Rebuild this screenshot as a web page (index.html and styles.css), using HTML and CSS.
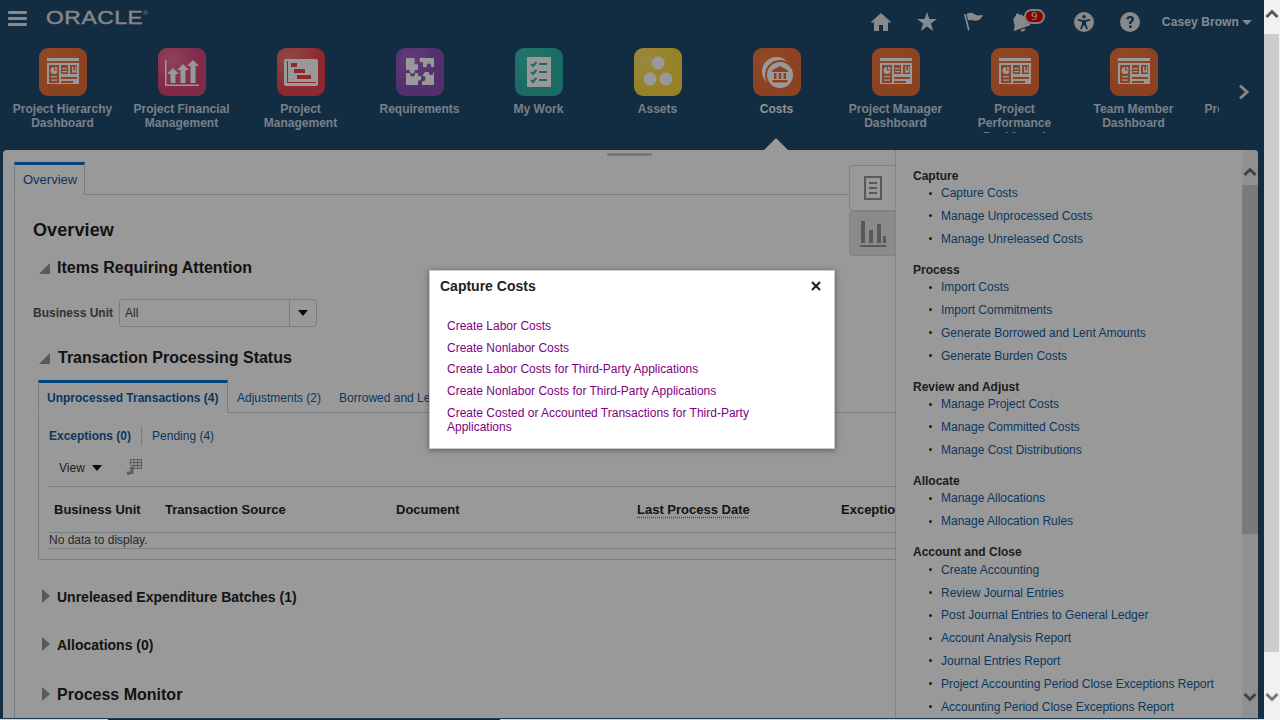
FILE: index.html
```html
<!DOCTYPE html>
<html lang="en">
<head>
<meta charset="utf-8">
<title>Costs</title>
<link rel="stylesheet" href="styles.css">
</head>
<body>
<svg class="defs" width="0" height="0" aria-hidden="true">
  <symbol id="dash" viewBox="0 0 48 48">
    <path class="g" d="M8 10h32v3H8zM8 15h32v21H8z"/>
    <path class="c" d="M10 17h10v18H10zM22 17h7v9h-7zM31 17h7v9h-7zM22 29h16v2H22zM22 33h12v2H22z"/>
    <path class="g" d="M15 19a3.5 3.5 0 1 0 3.5 3.5H15zM16 18.500a3.500 3.500 0 0 1 3 3h-3zM12 28h6v1.300h-6zM12 31.500h6v1.300h-6zM23 20h5v1.300h-5zM23 23h5v1.300h-5zM33 18.500h1.300v4h1.700v-4h1.300v6h-4.300z"/>
  </symbol>
</svg>
<div class="app">
  <header class="topbar">
    <button class="burger" aria-label="Menu"><i></i><i></i><i></i></button>
    <span class="logo">ORACLE<sup>®</sup></span>
    <div class="spring"></div>
    <svg class="ti home" viewBox="0 0 20 18"><path d="M10 0 0 9l1.200 1.300L3 8.700V18h5v-6h4v6h5V8.700l1.800 1.600L20 9z"/></svg>
    <svg class="ti star" viewBox="0 0 20 19"><path d="m10 0 2.400 7H20l-6.100 4.500L16.200 19 10 14.400 3.800 19l2.300-7.500L0 7h7.600z"/></svg>
    <svg class="ti flag" viewBox="0 0 20 19"><path d="M0 2.500 1.700 2l4 16-1.700.6zM2.500 2C6 0 9 .8 11 2.500c3 1.500 5 1 8 .2-1 2-2 3.500-3.500 5-3 1.500-6 1-8 .3-1.500-.3-2.500 0-3.200.5z"/></svg>
    <div class="bell-wrap">
      <svg class="ti bell" viewBox="0 0 20 20"><path d="M10 1c1 0 1.700.7 1.700 1.600 2.800.8 4.300 3.200 4.300 6.400 0 3 1 4.500 2.500 6v1.500H1.500V15C3 13.500 4 12 4 9c0-3.200 1.500-5.600 4.300-6.400C8.300 1.700 9 1 10 1zM7.500 17.500h5a2.500 2.500 0 0 1-5 0z"/></svg>
      <span class="badge">9</span>
    </div>
    <svg class="ti acc" viewBox="0 0 20 20"><path fill-rule="evenodd" d="M10 0a10 10 0 1 1 0 20 10 10 0 0 1 0-20zm0 3a1.800 1.800 0 1 0 0 3.600A1.800 1.800 0 0 0 10 3zM4 7l-.4 1.400 4.400 1.300v2.200L6 17l1.400.6 2.600-4.800 2.600 4.800L14 17l-2-5.100V9.700l4.400-1.300L16 7l-6 1.300z"/></svg>
    <svg class="ti help" viewBox="0 0 20 20"><path fill-rule="evenodd" d="M10 0a10 10 0 1 1 0 20 10 10 0 0 1 0-20zM9 13.500v2.600h2.500v-2.600zM10.300 4C8 4 6.600 5 6.300 7.200l2.400.4c.2-1 .7-1.500 1.500-1.500s1.300.4 1.300 1.100c0 .6-.3 1-1 1.500-1.200.9-1.500 1.500-1.500 3.200h2.400c0-1 .2-1.300 1-1.900 1-.8 1.600-1.600 1.600-2.900C14 5.200 12.500 4 10.300 4z"/></svg>
    <span class="user">Casey Brown</span>
    <span class="caret"></span>
  </header>

  <nav class="nav">
    <div class="nav-items">
      <a class="nav-item"><span class="tile orange"><svg viewBox="0 0 48 48"><use href="#dash"/></svg></span><span class="nav-label">Project Hierarchy Dashboard</span></a>
      <a class="nav-item"><span class="tile pink"><svg viewBox="0 0 48 48"><path class="g" d="M7 12h1.500v24.500H41V38H7z"/><path class="g" d="M15 20l6 6h-3.500v9h-5v-9H9zM25 16l6 6h-3.500v13h-5V22H19zM35 12l6 6h-3.500v17h-5V18H29z"/></svg></span><span class="nav-label">Project Financial Management</span></a>
      <a class="nav-item"><span class="tile red"><svg viewBox="0 0 48 48"><rect class="g" x="7" y="11" width="34" height="27" rx="2"/><path class="c" d="M10 13h1v21h28v1H10z"/><path class="c" d="M14 15h6v4h-6zM17 21h11v4H17zM20 27h14v4H20z"/></svg></span><span class="nav-label">Project Management</span></a>
      <a class="nav-item"><span class="tile purple"><svg viewBox="0 0 48 48"><path class="g" d="M10 10h9c-1 1.500-1 3 .5 3.800l-1.500 1c1 2 3 2 4 .7V22h-3.500c1 2-.5 4-2.500 3.500S13 23 14 22h-4zM27 10h11v9h-3c.8-2-.5-3.500-2-3.500s-3 1.500-2 3.500h-4v-5c-2 1-3.500 0-3.500-2s1.500-3 3.500-2zM10 25h4c-.5 2 1 3.500 2.500 3.500s3-1.500 2.500-3.500h3v3c2-.8 3.500.5 3.500 2s-1.500 3-3.500 2.500V37H10zM29 24h4c-1 2 .5 3 2 3s3-1 2-3h1v13H26v-4c2 .8 3.500-.5 3.500-2.500S28 27.500 26 28z"/></svg></span><span class="nav-label">Requirements</span></a>
      <a class="nav-item"><span class="tile teal"><svg viewBox="0 0 48 48"><rect class="g" x="12" y="9" width="24" height="30"/><path class="lines" d="M24 16h8M24 24h8M24 32h8"/><path class="checks" d="M16 16l2 2 3.500-4M16 24l2 2 3.500-4M16 32l2 2 3.500-4"/></svg></span><span class="nav-label">My Work</span></a>
      <a class="nav-item"><span class="tile yellow"><svg viewBox="0 0 48 48"><circle class="g" cx="24" cy="15" r="6.500"/><circle class="g" cx="16" cy="31" r="6.500"/><circle class="g" cx="32" cy="31" r="6.500"/></svg></span><span class="nav-label">Assets</span></a>
      <a class="nav-item current"><span class="tile orange"><svg viewBox="0 0 48 48"><circle class="g" cx="23.500" cy="23.500" r="14.500"/><circle class="c" cx="27" cy="27" r="15"/><circle class="g" cx="27" cy="27" r="13"/><path class="c" d="M27 18l8 4.500v1.500H19v-1.500zM21 25h2.500v6H21zM25.700 25h2.600v6h-2.600zM30.500 25H33v6h-2.500zM19.500 32h15v2.500h-15z"/></svg></span><span class="nav-label">Costs</span></a>
      <a class="nav-item"><span class="tile orange"><svg viewBox="0 0 48 48"><use href="#dash"/></svg></span><span class="nav-label">Project Manager Dashboard</span></a>
      <a class="nav-item"><span class="tile orange"><svg viewBox="0 0 48 48"><use href="#dash"/></svg></span><span class="nav-label clip3">Project Performance Dashboard</span></a>
      <a class="nav-item"><span class="tile orange"><svg viewBox="0 0 48 48"><use href="#dash"/></svg></span><span class="nav-label">Team Member Dashboard</span></a>
      <a class="nav-item"><span class="tile orange"><svg viewBox="0 0 48 48"><use href="#dash"/></svg></span><span class="nav-label">Project Financial Reporting</span></a>
    </div>
    <svg class="nav-next" viewBox="0 0 12 16"><path d="M2 1.500 9 8l-7 6.500"/></svg>
  </nav>

  <main class="main">
    <span class="grabber"></span>
    <section class="content">
      <div class="tabstrip"><a class="tab">Overview</a></div>
      <div class="tabbody">
        <h1 class="title">Overview</h1>
        <div class="sec-head"><i class="tri-open"></i><h2 class="h-large">Items Requiring Attention</h2></div>
        <div class="field">
          <label class="field-label">Business Unit</label>
          <div class="select"><span class="select-val">All</span><span class="select-btn"><i class="arrow"></i></span></div>
        </div>
        <div class="sec-head second"><i class="tri-open"></i><h2 class="h-large">Transaction Processing Status</h2></div>
        <div class="tabs2">
          <a class="tab2 active">Unprocessed Transactions (4)</a>
          <a class="tab2">Adjustments (2)</a>
          <a class="tab2">Borrowed and Lent Transactions (0)</a>
        </div>
        <div class="box">
          <div class="subtabs"><a class="sub on">Exceptions (0)</a><a class="sub">Pending (4)</a></div>
          <div class="toolbar">
            <span class="view">View</span><i class="arrow"></i>
            <svg class="export" viewBox="0 0 16 16"><path d="M4.500.5h11v9h-8M4.500.5v5M4.500 3.500h11M4.500 6.500h11M8 .5v9M11.800.5v9"/><path class="solid" d="M1 16v-3.500h3.500V10H3l3-3 3 3H7.500v5H3.500v1z"/></svg>
          </div>
          <div class="thead">
            <span class="th c1">Business Unit</span>
            <span class="th c2">Transaction Source</span>
            <span class="th c3">Document</span>
            <span class="th c4"><u>Last Process Date</u></span>
            <span class="th">Exception</span>
          </div>
          <div class="nodata">No data to display.</div>
        </div>
        <div class="sec-head closed"><i class="tri-closed"></i><h3 class="h-small">Unreleased Expenditure Batches (1)</h3></div>
        <div class="sec-head closed"><i class="tri-closed"></i><h3 class="h-small">Allocations (0)</h3></div>
        <div class="sec-head closed last"><i class="tri-closed"></i><h2 class="h-large">Process Monitor</h2></div>
      </div>
      <div class="sidetab on"><svg viewBox="0 0 18 24"><path d="M1 1h16v22H1zM5 7h8M5 12h8M5 17h8"/></svg></div>
      <div class="sidetab"><svg viewBox="0 0 26 26"><path class="solid" d="M1 0h4v22H1zM9 9h4v13H9zM17 3h4v19h-4zM23 15h3v7h-3zM0 24h26v2H0z"/></svg></div>
    </section>

    <aside class="side">
      <h4>Capture</h4>
      <ul><li><a>Capture Costs</a></li><li><a>Manage Unprocessed Costs</a></li><li><a>Manage Unreleased Costs</a></li></ul>
      <h4>Process</h4>
      <ul><li><a>Import Costs</a></li><li><a>Import Commitments</a></li><li><a>Generate Borrowed and Lent Amounts</a></li><li><a>Generate Burden Costs</a></li></ul>
      <h4>Review and Adjust</h4>
      <ul><li><a>Manage Project Costs</a></li><li><a>Manage Committed Costs</a></li><li><a>Manage Cost Distributions</a></li></ul>
      <h4>Allocate</h4>
      <ul><li><a>Manage Allocations</a></li><li><a>Manage Allocation Rules</a></li></ul>
      <h4>Account and Close</h4>
      <ul><li><a>Create Accounting</a></li><li><a>Review Journal Entries</a></li><li><a>Post Journal Entries to General Ledger</a></li><li><a>Account Analysis Report</a></li><li><a>Journal Entries Report</a></li><li><a>Project Accounting Period Close Exceptions Report</a></li><li><a>Accounting Period Close Exceptions Report</a></li></ul>
    </aside>

    <div class="vbar">
      <svg class="vb-arrow up" viewBox="0 0 14 10"><path d="M1.500 8 7 2.500 12.500 8"/></svg>
      <div class="vb-thumb"></div>
      <div class="vb-rest"></div>
      <svg class="vb-arrow down" viewBox="0 0 14 10"><path d="M1.500 2 7 7.500 12.500 2"/></svg>
    </div>
  </main>

  <span class="pointer"></span>
  <div class="scrim"></div>
  <div class="bottom"><i class="b-light"></i><i class="b-dark"></i><i class="b-light grow"></i></div>

  <div class="modal" role="dialog">
    <div class="modal-head">
      <span class="modal-title">Capture Costs</span>
      <svg class="modal-close" viewBox="0 0 10 10"><path d="M1 1l8 8M9 1l-8 8"/></svg>
    </div>
    <ul class="modal-links">
      <li><a>Create Labor Costs</a></li>
      <li><a>Create Nonlabor Costs</a></li>
      <li><a>Create Labor Costs for Third-Party Applications</a></li>
      <li><a>Create Nonlabor Costs for Third-Party Applications</a></li>
      <li><a>Create Costed or Accounted Transactions for Third-Party Applications</a></li>
    </ul>
  </div>
</div>

<div class="pagebar">
  <svg class="pb-arrow" viewBox="0 0 14 10"><path d="M1.500 8 7 2.500 12.500 8"/></svg>
  <div class="pb-thumb"></div>
  <svg class="pb-arrow" viewBox="0 0 14 10"><path d="M1.500 2 7 7.500 12.500 2"/></svg>
</div>
</body>
</html>
```
FILE: styles.css
```css
* { box-sizing: border-box; }
html, body { margin: 0; height: 720px; overflow: hidden; }
body { display: flex; font: 12px/14px "Liberation Sans", Arial, sans-serif; color: #333; background: #fff; }
.defs { position: absolute; }
h1, h2, h3, h4, ul { margin: 0; padding: 0; list-style: none; }
i { display: block; }
.app { position: relative; width: 1264px; height: 720px; flex: none; background: #1e4a6e; overflow: hidden; }

/* top bar */
.topbar { display: flex; align-items: center; height: 43px; color: #dfe6ec; }
.burger { width: 19px; height: 15px; margin: 0 0 6px 8px; padding: 0; border: 0; background: none; display: flex; flex-direction: column; justify-content: space-between; }
.burger i { height: 3px; background: #e4e4e4; border-radius: 1px; }
.logo { width: 103px; margin: 0 0 7px 19px; font-size: 19px; line-height: 18px; letter-spacing: .5px; color: #e0e0e0; -webkit-text-stroke: .4px #e0e0e0; transform: scaleX(1.2); transform-origin: left center; white-space: nowrap; }
.logo sup { font-size: 5px; line-height: 0; letter-spacing: 0; -webkit-text-stroke: 0; vertical-align: 9px; }
.spring { flex: 1; }
.ti { display: block; flex: none; fill: #e2e5e8; }
.home { width: 20px; height: 18px; margin-right: 26px; }
.star { width: 20px; height: 19px; margin-right: 27px; }
.flag { width: 20px; height: 19px; }
.bell-wrap { position: relative; width: 20px; height: 20px; margin: 0 44px 0 26px; }
.bell { width: 20px; height: 20px; transform: rotate(-20deg); }
.badge { position: absolute; left: 14px; top: -3px; width: 21px; height: 15px; border-radius: 8px; border: 2px solid #d8d8d8; background: #e00000; color: #fff; font: 12px/11px "Liberation Serif", serif; text-align: center; }
.acc { width: 20px; height: 20px; margin-right: 26px; }
.help { width: 20px; height: 20px; margin-right: 22px; }
.user { font-weight: 700; letter-spacing: .1px; color: #dbe4ec; white-space: nowrap; }
.caret { width: 0; height: 0; margin: 2px 12px 0 3px; border: 5px solid transparent; border-top-color: #dbe4ec; border-bottom: 0; }

/* navigation strip */
.nav { display: flex; height: 107px; padding: 5px 0 0 3px; }
.nav-items { display: flex; width: 1216px; height: 86px; overflow: hidden; flex: none; }
.nav-item { width: 119px; flex: none; display: flex; flex-direction: column; align-items: center; }
.tile { display: block; width: 48px; height: 48px; border-radius: 9px; flex: none; }
.tile svg { display: block; width: 48px; height: 48px; }
.tile .g, .g { fill: #fff; }
.orange { background: radial-gradient(circle at 30% 25%, #f27a42, #e96d37 70%); }
.c { fill: #ec7038; }
.pink { background: radial-gradient(circle at 30% 25%, #ec6e97, #d9447b 60%); }
.pink .c { fill: #d9447b; }
.red { background: radial-gradient(circle at 25% 20%, #f1767a, #ec454d 60%); }
.red .c { fill: #ec454d; }
.purple { background: radial-gradient(circle at 30% 25%, #a165c9, #8a4fb6 60%); }
.teal { background: radial-gradient(circle at 30% 25%, #3ec2b5, #2bb3a6 60%); }
.yellow { background: radial-gradient(circle at 25% 25%, #ffe26a, #fbd83d 60%); }
.lines { fill: none; stroke: #2bb3a6; stroke-width: 2; }
.checks { fill: none; stroke: #2bb3a6; stroke-width: 2; }
.nav-label { display: block; width: 112px; max-height: 30px; margin-top: 6px; overflow: hidden; font-weight: 700; text-align: center; color: #c8d6e2; }
.nav-label.clip3 { max-height: 31px; }
.nav-item.current .nav-label { color: #f1f1f1; }
.nav-next { width: 12px; height: 16px; margin: 36px 0 0 19px; fill: none; stroke: #dfdfdf; stroke-width: 3; flex: none; }

/* main panel */
.main { position: relative; display: flex; height: 568px; margin: 0 6px 0 3px; background: #fff; border-radius: 4px 4px 0 0; overflow: hidden; }
.grabber { position: absolute; left: 604px; top: 3px; width: 45px; height: 3px; border-radius: 2px; background: #c4c9d4; }
.pointer { position: absolute; left: 764px; top: 138px; width: 0; height: 0; border: 12px solid transparent; border-top: 0; border-bottom-color: #fff; }
.content { position: relative; width: 892px; flex: none; padding: 12px 0 0 11px; overflow: hidden; }
.tabstrip { display: flex; height: 33px; border-bottom: 1px solid #c8d1d9; margin-right: 45px; }
.tab { width: 71px; height: 33px; padding: 8px 0 0 8px; border: 1px solid #c8d1d9; border-top: 3px solid #0572ce; border-bottom-color: #fff; font-size: 13px; color: #145c9e; background: #fff; }
.tabbody { border-left: 1px solid #c8d1d9; padding: 25px 0 40px 18px; height: 560px; }
.title { font-size: 18px; line-height: 20px; font-weight: 700; letter-spacing: .1px; color: #222; }
.sec-head { display: flex; align-items: center; margin-top: 18px; height: 20px; }
.sec-head.second { margin-top: 21px; }
.sec-head.second .tri-open { margin-right: 8px; }
.sec-head.closed { margin-top: 27px; }
.sec-head.closed + .closed { margin-top: 28px; }
.sec-head.closed.last { margin-top: 30px; }
.tri-open { width: 0; height: 0; margin: 0 7px 0 6px; border-left: 11px solid transparent; border-bottom: 11px solid #949494; }
.tri-closed { width: 0; height: 0; margin: -2px 7px 0 9px; border: 7px solid transparent; border-left: 8px solid #949494; border-right: 0; }
.h-large { font-size: 16px; line-height: 20px; font-weight: 700; color: #222; }
.h-small { font-size: 14px; line-height: 20px; font-weight: 700; color: #222; }
.field { display: flex; align-items: center; margin-top: 21px; }
.field-label { width: 86px; flex: none; font-weight: 700; color: #555; }
.select { display: flex; width: 198px; height: 28px; border: 1px solid #c8d1d9; border-radius: 3px; }
.select-val { flex: 1; padding: 6px 0 0 5px; color: #444; }
.select-btn { width: 27px; border-left: 1px solid #c8d1d9; display: flex; align-items: center; justify-content: center; }
.arrow { width: 0; height: 0; border: 5px solid transparent; border-top: 6px solid #111; border-bottom: 0; }
.tabs2 { display: flex; height: 33px; margin: 12px 0 0 5px; border-bottom: 1px solid #c8d1d9; width: 857px; }
.tab2 { height: 32px; padding: 11px 9px 0; color: #145c9e; white-space: nowrap; }
.tab2.active { width: 190px; height: 33px; padding: 8px 0 0 8px; border: 1px solid #c8d1d9; border-top: 3px solid #0572ce; border-bottom-color: #fff; font-weight: 700; background: #fff; }
.box { margin-left: 5px; width: 857px; height: 147px; border-left: 1px solid #c8d1d9; border-bottom: 1px solid #c8d1d9; border-radius: 0 0 0 4px; padding: 13px 0 0 10px; }
.subtabs { display: flex; height: 20px; align-items: center; }
.sub { color: #145c9e; padding: 3px 11px 3px 0; }
.sub.on { font-weight: 700; border-right: 1px solid #c8d1d9; margin-right: 10px; padding-right: 10px; }
.toolbar { display: flex; align-items: center; height: 41px; padding: 3px 0 0 10px; border-bottom: 1px solid #c8d1d9; }
.view { margin-right: 7px; color: #333; }
.export { width: 16px; height: 16px; margin: -1px 0 0 24px; fill: none; stroke: #9a9a9a; stroke-width: 1; }
.export .solid { fill: #9a9a9a; stroke: none; }
.thead { display: flex; align-items: center; height: 46px; padding: 0 0 0 5px; border-bottom: 1px solid #c8d1d9; white-space: nowrap; }
.th { font-size: 13px; font-weight: 700; color: #222; flex: none; }
.th u { text-decoration: underline dotted #888; text-underline-offset: 3px; }
.c1 { width: 111px; } .c2 { width: 231px; } .c3 { width: 241px; } .c4 { width: 204px; }
.nodata { height: 16px; line-height: 15px; border-bottom: 1px solid #c8d1d9; color: #444; }
.sidetab { position: absolute; right: 0; top: 15px; width: 46px; height: 46px; background: #fff; border: 1px solid #d9d9d9; border-right: 0; border-radius: 4px 0 0 4px; display: flex; align-items: center; justify-content: center; }
.sidetab + .sidetab { top: 61px; height: 45px; background: #e6e6e6; }
.sidetab svg { width: 18px; height: 24px; fill: none; stroke: #949494; stroke-width: 2; }
.sidetab + .sidetab svg { width: 26px; height: 26px; }
.sidetab .solid { fill: #949494; stroke: none; }

/* task list */
.side { width: 347px; flex: none; padding: 18.500px 0 0 17px; border-left: 1px solid #dcdcdc; overflow: hidden; white-space: nowrap; }
.side h4 { font-size: 12px; line-height: 14px; font-weight: 700; color: #333; margin-bottom: 3.500px; }
.side ul { padding-left: 16px; margin-bottom: 17.100px; display: flex; flex-direction: column; gap: 8.800px; }
.side li { display: flex; align-items: center; }
.side li::before { content: ""; width: 3px; height: 3px; margin-right: 9px; border-radius: 50%; background: #333; flex: none; }
.side a { color: #145c9e; }

.vbar { position: relative; width: 16px; flex: none; background: #f0f0f0; display: flex; flex-direction: column; }
.vb-thumb { height: 349px; margin-top: 35px; background: #cbcbcb; }
.vb-rest { flex: 1; }
.vb-arrow { position: absolute; left: 1px; width: 14px; height: 10px; fill: none; stroke: #707070; stroke-width: 3; }
.vb-arrow.up { top: 17px; }
.vb-arrow.down { top: 542px; }

/* scrim and modal */
.scrim { position: absolute; inset: 0; background: rgba(0,0,0,.4); }
.bottom { position: absolute; left: 0; right: 0; bottom: 0; height: 2px; display: flex; border-top: 1px solid #223a4e; }
.bottom i { height: 1px; }
.b-light { width: 108px; background: #c9d6e2; }
.b-dark { width: 392px; background: #222; }
.grow { flex: 1; }
.modal { position: absolute; left: 429px; top: 270px; width: 406px; height: 179px; background: #fff; border: 1px solid #c3ccd4; box-shadow: 0 1px 6px rgba(0,0,0,.45); padding: 7px 0 0 10px; }
.modal-head { display: flex; justify-content: space-between; align-items: center; height: 16px; padding-right: 13px; }
.modal-title { font-size: 14px; font-weight: 700; color: #222; }
.modal-close { width: 10px; height: 10px; fill: none; stroke: #222; stroke-width: 2.200; }
.modal-links { margin: 25px 0 0 7px; width: 350px; display: flex; flex-direction: column; gap: 7.700px; }
.modal-links a { color: #800080; }

/* browser scrollbar */
.pagebar { width: 16px; flex: none; background: #f1f1f1; display: flex; flex-direction: column; position: relative; }
.pb-thumb { width: 15px; height: 618px; margin-top: 34px; background: #cdcdcd; }
.pb-arrow { position: absolute; left: 1px; top: 9px; width: 14px; height: 10px; fill: none; stroke: #555; stroke-width: 3; }
.pb-arrow:last-child { top: 692px; stroke: #777; }
```
